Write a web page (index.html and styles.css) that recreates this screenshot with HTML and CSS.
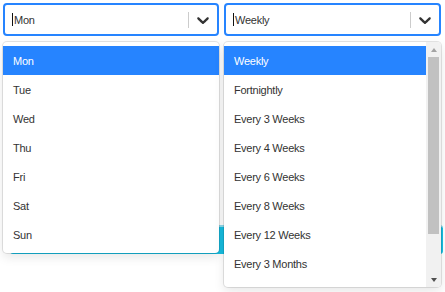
FILE: index.html
```html
<!DOCTYPE html>
<html lang="en">
<head>
    <meta charset="UTF-8">
    <meta name="viewport" content="width=device-width, initial-scale=1.0">
    <title>Schedule</title>
    <link rel="stylesheet" href="styles.css">
</head>
<body>
    <div class="page">
        <div class="selects">
            <!-- Day select -->
            <div class="select select-day">
                <div class="control">
                    <div class="value"><span class="caret"></span>Mon</div>
                    <span class="separator"></span>
                    <div class="indicator">
                        <svg width="20" height="20" viewBox="0 0 20 20"><path d="M4.516 7.548c0.436-0.446 1.043-0.481 1.576 0l3.908 3.747 3.908-3.747c0.533-0.481 1.141-0.446 1.574 0 0.436 0.445 0.408 1.197 0 1.615-0.406 0.418-4.695 4.502-4.695 4.502-0.217 0.223-0.502 0.335-0.787 0.335s-0.57-0.112-0.789-0.335c0 0-4.287-4.084-4.695-4.502s-0.436-1.17 0-1.615z"/></svg>
                    </div>
                </div>
                <div class="menu">
                    <div class="menu-list">
                        <div class="option selected">Mon</div>
                        <div class="option">Tue</div>
                        <div class="option">Wed</div>
                        <div class="option">Thu</div>
                        <div class="option">Fri</div>
                        <div class="option">Sat</div>
                        <div class="option">Sun</div>
                    </div>
                </div>
            </div>

            <!-- Frequency select -->
            <div class="select select-freq">
                <div class="control">
                    <div class="value"><span class="caret"></span>Weekly</div>
                    <span class="separator"></span>
                    <div class="indicator">
                        <svg width="20" height="20" viewBox="0 0 20 20"><path d="M4.516 7.548c0.436-0.446 1.043-0.481 1.576 0l3.908 3.747 3.908-3.747c0.533-0.481 1.141-0.446 1.574 0 0.436 0.445 0.408 1.197 0 1.615-0.406 0.418-4.695 4.502-4.695 4.502-0.217 0.223-0.502 0.335-0.787 0.335s-0.57-0.112-0.789-0.335c0 0-4.287-4.084-4.695-4.502s-0.436-1.17 0-1.615z"/></svg>
                    </div>
                </div>
                <div class="menu menu-scroll">
                    <div class="menu-list">
                        <div class="option selected">Weekly</div>
                        <div class="option">Fortnightly</div>
                        <div class="option">Every 3 Weeks</div>
                        <div class="option">Every 4 Weeks</div>
                        <div class="option">Every 6 Weeks</div>
                        <div class="option">Every 8 Weeks</div>
                        <div class="option">Every 12 Weeks</div>
                        <div class="option">Every 3 Months</div>
                    </div>
                    <div class="scrollbar">
                        <div class="scroll-btn"><span class="arrow-up"></span></div>
                        <div class="scroll-thumb"></div>
                        <div class="scroll-track"></div>
                        <div class="scroll-btn"><span class="arrow-down"></span></div>
                    </div>
                </div>
            </div>
        </div>

        <div class="save-bar"></div>
    </div>
</body>
</html>
```

FILE: styles.css
```css
* {
    margin: 0;
    padding: 0;
    box-sizing: border-box;
    font-family: 'Liberation Sans', Arial, sans-serif;
}

body {
    background-color: #fff;
    color: #333;
}

.page {
    min-height: 292px;
    padding: 3px;
}

.selects {
    display: flex;
    gap: 5px;
}

.select {
    position: relative;
    width: 216px;
}

.select-freq {
    width: 217px;
}

/* Control */
.control {
    display: flex;
    align-items: center;
    height: 33px;
    border: 2px solid #2684ff;
    border-radius: 4px;
    background-color: #fff;
}

.value {
    flex: 1;
    display: flex;
    align-items: center;
    padding-left: 7px;
    font-size: 11px;
    letter-spacing: -0.25px;
    color: #333;
}

.caret {
    display: inline-block;
    width: 1px;
    height: 13px;
    background-color: #111;
    margin-right: 1px;
}

.separator {
    width: 1px;
    height: 16px;
    background-color: #ccc;
}

.indicator {
    width: 28px;
    display: flex;
    justify-content: center;
    align-items: center;
}

.indicator svg {
    fill: #333;
}

/* Menu */
.menu {
    position: absolute;
    top: 39px;
    left: 0;
    right: 0;
    z-index: 2;
    background-color: #fff;
    border-radius: 4px;
    box-shadow: 0 0 0 1px rgba(0, 0, 0, 0.1), 0 4px 11px rgba(0, 0, 0, 0.1);
    overflow: hidden;
}

.menu-list {
    padding: 4px 0;
}

.option {
    height: 29px;
    display: flex;
    align-items: center;
    padding: 0 10px;
    font-size: 11px;
    letter-spacing: -0.25px;
    color: #333;
}

.option.selected {
    background-color: #2684ff;
    color: #fff;
}

/* Scrolling menu with its scrollbar */
.menu-scroll {
    display: flex;
    height: 245px;
}

.menu-scroll .menu-list {
    flex: 1;
    overflow: hidden;
}

.scrollbar {
    width: 15px;
    display: flex;
    flex-direction: column;
    background-color: #f1f1f1;
}

.scroll-btn {
    height: 15px;
    display: flex;
    justify-content: center;
    align-items: center;
}

.arrow-up {
    border-left: 3.5px solid transparent;
    border-right: 3.5px solid transparent;
    border-bottom: 4px solid #a3a3a3;
}

.arrow-down {
    border-left: 3.5px solid transparent;
    border-right: 3.5px solid transparent;
    border-top: 4px solid #505050;
}

.scroll-thumb {
    height: 177px;
    margin: 0 2px;
    background-color: #c1c1c1;
}

.scroll-track {
    flex: 1;
}

/* Button behind the menus */
.save-bar {
    margin: 189px 0 0 7px;
    width: 433px;
    height: 29px;
    border-radius: 3px;
    background-color: #17bfe3;
    border-top: 2px solid #8fdcee;
}
```
